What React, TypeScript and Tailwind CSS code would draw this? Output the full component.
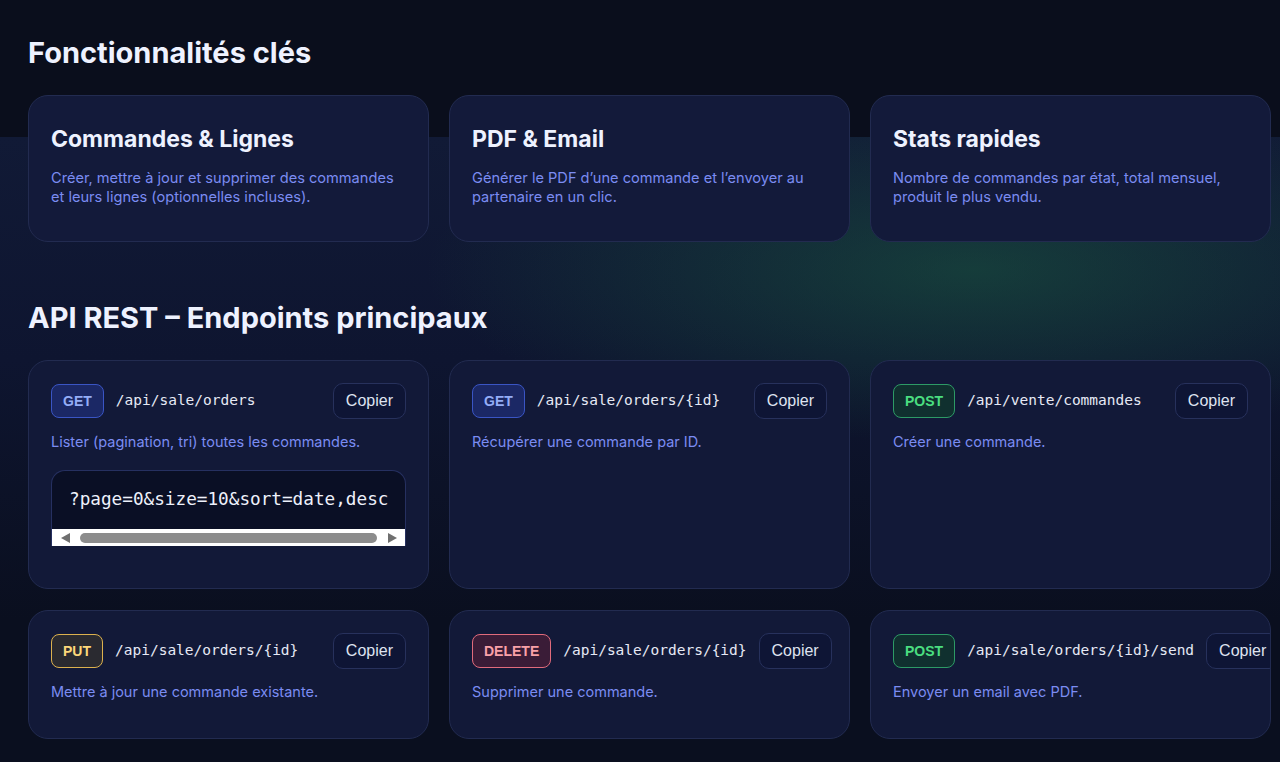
import React from 'react'

interface IFeature {
  title: string
  desc: string
}

interface IEndpoint {
  method: 'GET' | 'POST' | 'PUT' | 'DELETE'
  path: string
  desc: string
  example?: string
}

const features: IFeature[] = [
  { title: 'Commandes & Lignes', desc: 'Créer, mettre à jour et supprimer des commandes et leurs lignes (optionnelles incluses).' },
  { title: 'PDF & Email', desc: 'Générer le PDF d’une commande et l’envoyer au partenaire en un clic.' },
  { title: 'Stats rapides', desc: 'Nombre de commandes par état, total mensuel, produit le plus vendu.' },
]

const endpoints: IEndpoint[] = [
  { method: 'GET', path: '/api/sale/orders', desc: 'Lister (pagination, tri) toutes les commandes.', example: '?page=0&size=10&sort=date,desc' },
  { method: 'GET', path: '/api/sale/orders/{id}', desc: 'Récupérer une commande par ID.' },
  { method: 'POST', path: '/api/vente/commandes', desc: 'Créer une commande.' },
  { method: 'PUT', path: '/api/sale/orders/{id}', desc: 'Mettre à jour une commande existante.' },
  { method: 'DELETE', path: '/api/sale/orders/{id}', desc: 'Supprimer une commande.' },
  { method: 'POST', path: '/api/sale/orders/{id}/send', desc: 'Envoyer un email avec PDF.' },
]

const methodStyles = {
  GET: 'border-[#3a55c4] bg-[#1b2865] text-[#94adf7]',
  POST: 'border-[#2d9a66] bg-[#10302f] text-[#4ade80]',
  PUT: 'border-[#dcb14e] bg-[#2a2a30] text-[#fcd77a]',
  DELETE: 'border-[#e06b7c] bg-[#3a1c37] text-[#f9a1a8]',
}

const FeatureCard = ({ title, desc }: IFeature) => (
  <div className="rounded-[20px] border border-[#222b50] bg-[#131a3a] px-[22px] pt-[30px] pb-[34px]">
    <h3 className="text-[23px] leading-[27px] font-bold text-[#eef2ff]">{title}</h3>
    <p className="mt-[16px] text-[14.6px] leading-[19px] text-[#7b8cf2]">{desc}</p>
  </div>
)

// code sample with a horizontal scrollbar look
const CodeBlock = ({ code }: { code: string }) => (
  <div className="mt-[18px] mb-[20px] overflow-hidden rounded-t-[14px] border border-b-0 border-[#263060] bg-[#0a0f25]">
    <pre className="overflow-hidden whitespace-pre px-[17px] pt-[15px] pb-[16px] font-['DejaVu_Sans_Mono','Liberation_Mono',monospace] text-[17.7px] leading-[27px] text-[#eef1fb]">
      {code}
    </pre>
    <div className="flex h-[17px] items-center bg-white pl-[9px] pr-[8px]">
      <span className="h-0 w-0 border-y-[5px] border-r-[9px] border-y-transparent border-r-[#6f6f6f]" />
      <span className="ml-[10px] h-[10px] flex-1 rounded-full bg-[#8c8c8c]" />
      <span className="ml-[11px] h-0 w-0 border-y-[5px] border-l-[9px] border-y-transparent border-l-[#6f6f6f]" />
    </div>
  </div>
)

const EndpointCard = ({ method, path, desc, example }: IEndpoint) => (
  <div className="overflow-hidden rounded-[20px] border border-[#222b50] bg-[#121938] p-[22px]">
    <div className="flex items-center gap-3">
      <span
        className={`flex h-[34px] shrink-0 items-center rounded-[8px] border px-[11px] font-['Liberation_Sans',Arial,sans-serif] text-[14px] font-bold ${methodStyles[method]}`}
      >
        {method}
      </span>
      <code className="shrink-0 whitespace-nowrap font-['DejaVu_Sans_Mono','Liberation_Mono',monospace] text-[14.5px] text-[#e6e9f5]">
        {path}
      </code>
      <button className="ml-auto h-[36px] shrink-0 rounded-[10px] border border-[#27315c] bg-[#0e1535] px-[12px] font-['Liberation_Sans',Arial,sans-serif] text-[16px] text-[#dfe3f0]">
        Copier
      </button>
    </div>
    <p className="mt-[13px] mb-[14px] text-[14.5px] leading-[20px] text-[#7b8cf2]">{desc}</p>
    {example && <CodeBlock code={example} />}
  </div>
)

export default function App() {
  return (
    <div className="min-h-[762px] w-full bg-[#0a0f1f] bg-[linear-gradient(180deg,#0a0e1c_0px,#0a0e1c_137px,transparent_137px),radial-gradient(ellipse_760px_240px_at_76%_270px,rgba(30,112,70,0.42),transparent_72%),linear-gradient(180deg,#111a36_137px,#0e1530_360px,#0a0f1f_620px)] pt-[36px] pb-[24px] pl-[28px] font-['Inter','Noto_Sans',sans-serif]">
      <div className="w-[1243px]">
        <h2 className="text-[29px] leading-[34px] font-bold text-[#eef2ff]">Fonctionnalités clés</h2>
        <div className="mt-[25px] grid grid-cols-3 gap-5">
          {features.map((f) => (
            <FeatureCard key={f.title} {...f} />
          ))}
        </div>

        <h2 className="mt-[59px] text-[29px] leading-[34px] font-bold text-[#eef2ff]">API REST – Endpoints principaux</h2>
        <div className="mt-[25px] grid grid-cols-3 gap-x-5 gap-y-[21px]">
          {endpoints.map((e, i) => (
            <EndpointCard key={i} {...e} />
          ))}
        </div>
      </div>
    </div>
  )
}
